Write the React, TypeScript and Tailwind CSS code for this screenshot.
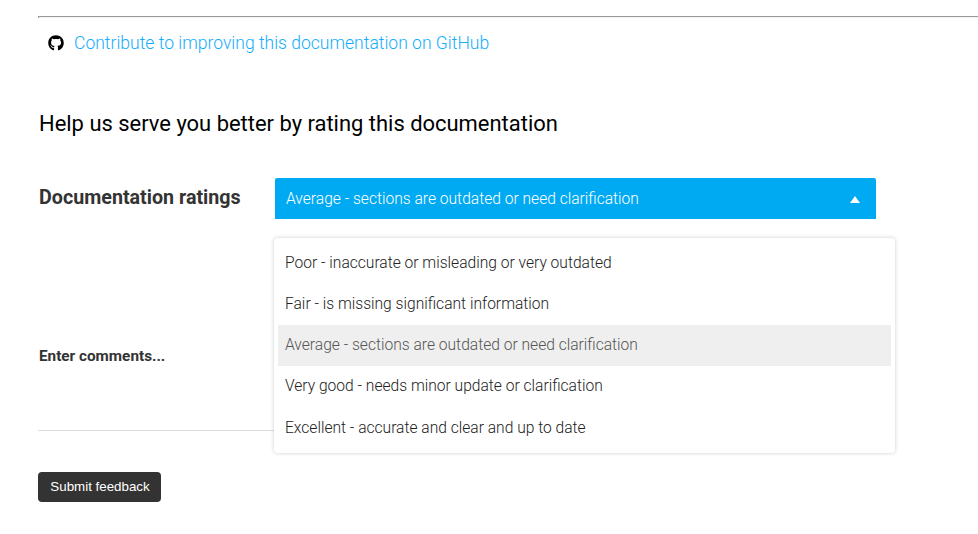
import { FaGithub } from "react-icons/fa";

const options = [
  "Poor - inaccurate or misleading or very outdated",
  "Fair - is missing significant information",
  "Average - sections are outdated or need clarification",
  "Very good - needs minor update or clarification",
  "Excellent - accurate and clear and up to date",
];

export default function App() {
  return (
    <div className="h-[534px] overflow-hidden bg-white pl-[38px] pt-4 font-['Roboto',sans-serif] text-black">
      <div className="h-[2px] border-l border-t border-[#999] bg-[#f4f4f4]" />

      <a className="ml-[10px] mt-[13px] flex h-6 items-center text-[17.55px] font-light text-[#14adfb]">
        <FaGithub className="mr-[10px] h-4 w-4 text-black" />
        Contribute to improving this documentation on GitHub
      </a>

      <h2 className="ml-px mt-[54px] text-[21.95px] leading-[30px]">Help us serve you better by rating this documentation</h2>

      <div className="mt-[39px] flex items-start">
        <label className="ml-px mt-[6px] w-[236px] text-[19.7px] font-bold leading-7 text-[#333]">Documentation ratings</label>
        <div className="relative">
          <button className="flex h-[41px] w-[601px] items-center justify-between rounded-t-[2px] bg-[#00aaf3] pl-[11px] pr-4 pt-[2px] text-left text-[15.6px] font-light text-white">
            Average - sections are outdated or need clarification
            <span className="h-0 w-0 border-x-[5px] border-b-[7px] border-x-transparent border-b-white" />
          </button>

          {/* open dropdown */}
          <ul className="absolute left-[-1px] top-[60px] z-10 h-[215px] w-[621px] rounded-[4px] bg-white px-1 pt-[4.3px] text-[15.6px] font-light text-[#222] shadow-[0_0_4px_rgba(0,0,0,0.2)]">
            {options.map((o, i) => (
              <li
                key={o}
                className={
                  "flex h-[41.4px] items-center px-[7px] " +
                  (i === 0 ? "pt-[2px] " : "") +
                  (i === 2 ? "bg-[#efefef] text-[#555]" : "")
                }
              >
                {o}
              </li>
            ))}
          </ul>
        </div>
      </div>

      <p className="ml-px mt-[127px] text-[15.3px] font-bold leading-5 text-[#333]">Enter comments...</p>

      <div className="mt-[64px] w-[600px] border-t border-[#ddd]" />

      <button className="mt-[41px] flex h-[30px] w-[123px] items-center justify-center rounded-[4px] bg-[#333] pl-px font-['Liberation_Sans',sans-serif] text-[13.33px] text-white">
        Submit feedback
      </button>
    </div>
  );
}
